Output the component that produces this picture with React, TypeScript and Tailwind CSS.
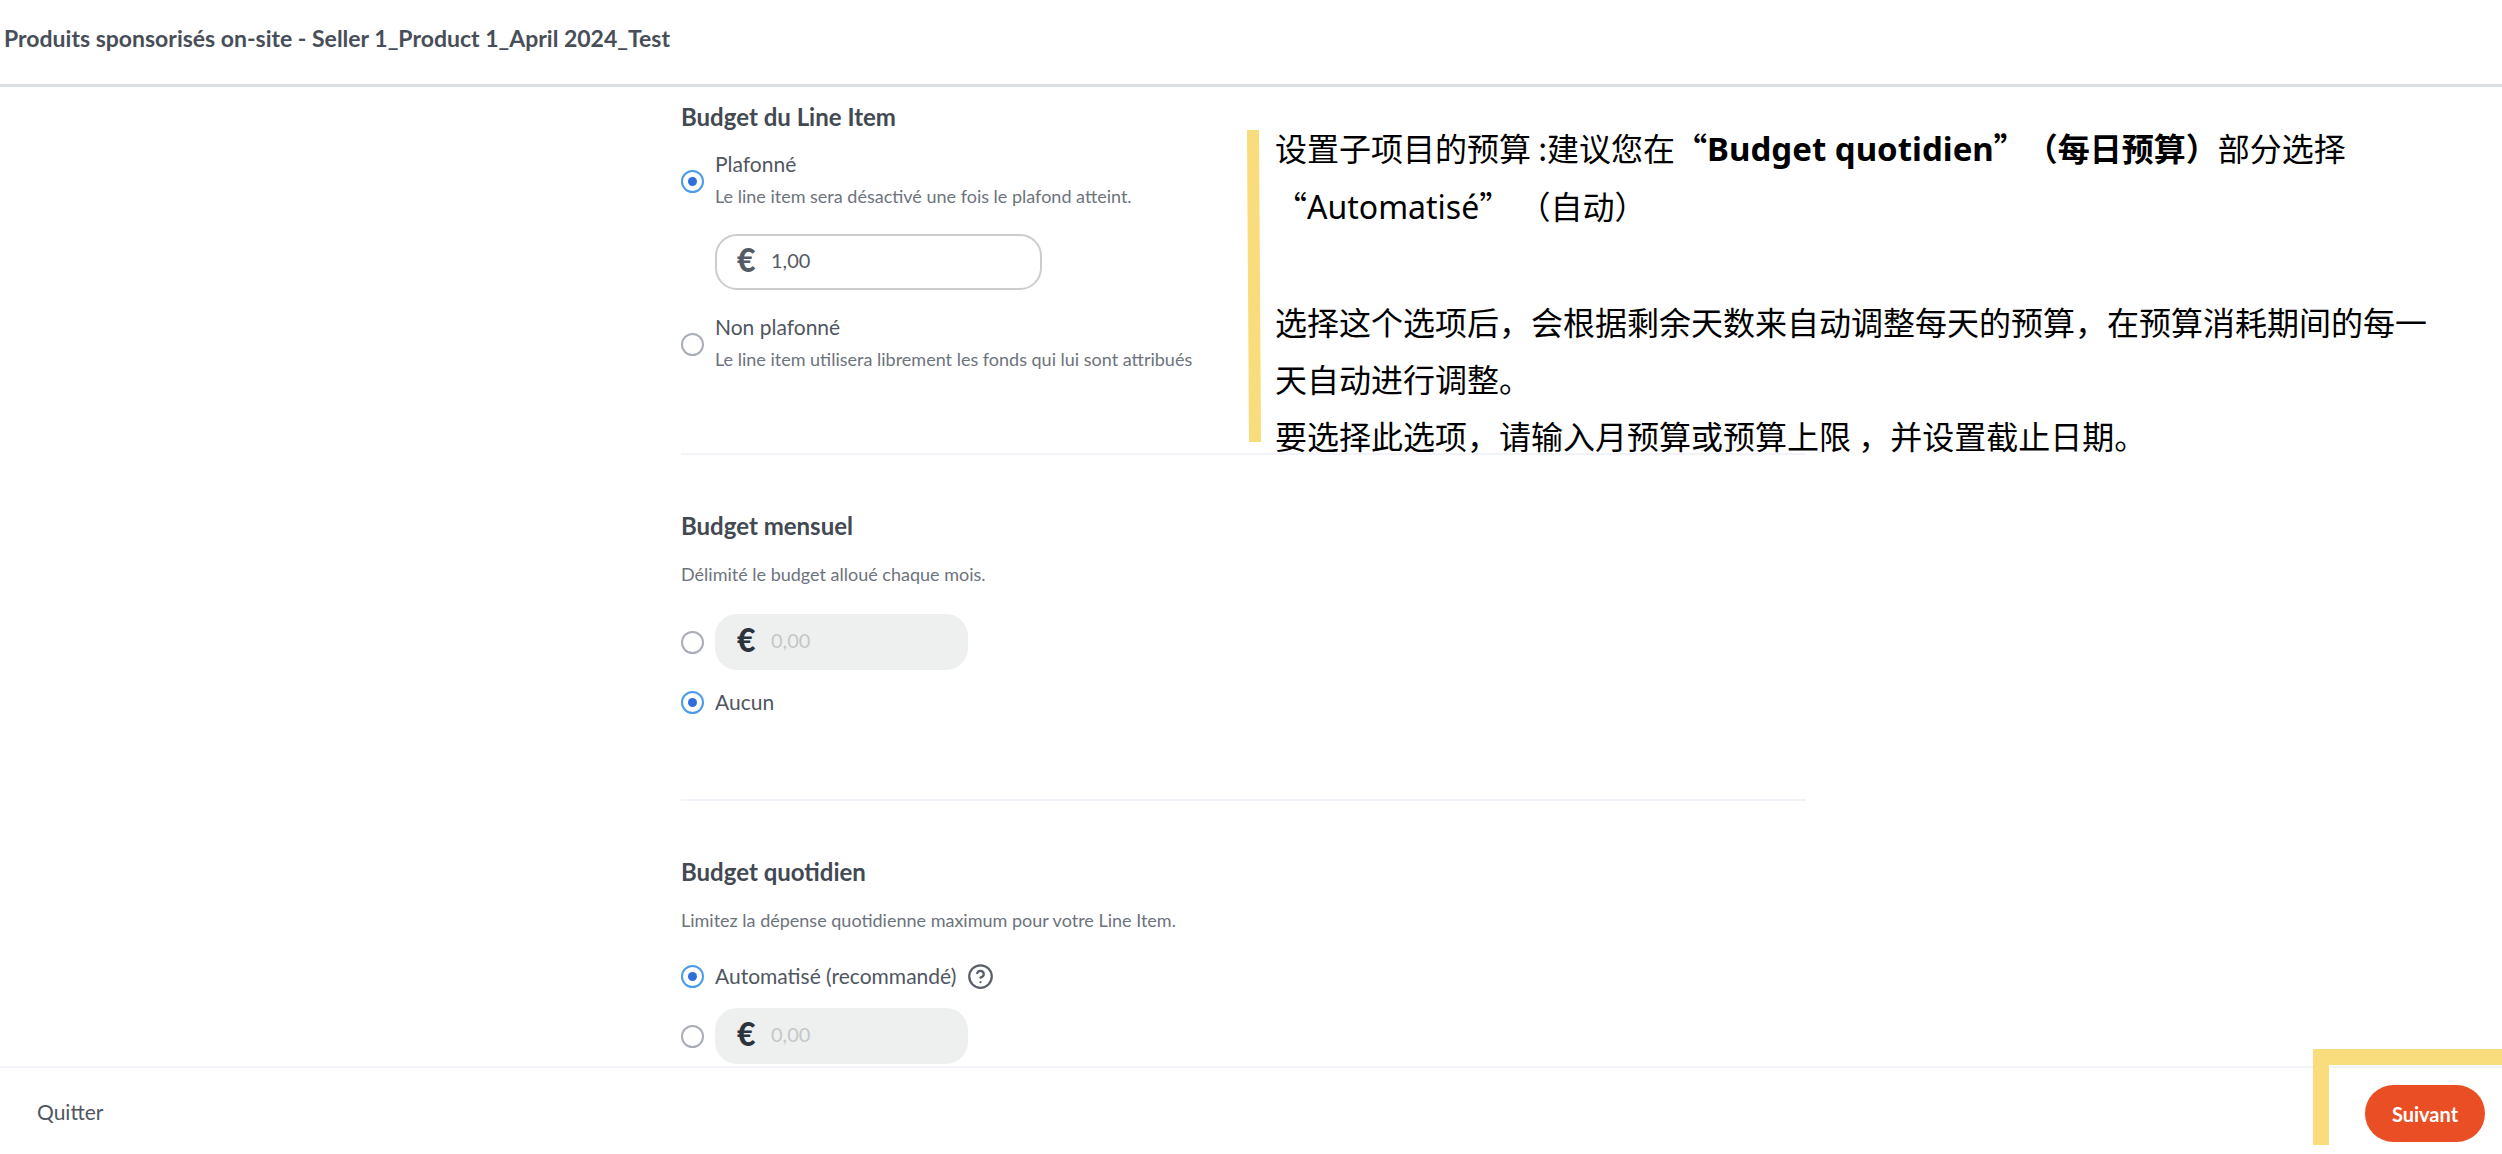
import React, { useState } from 'react';
import { CircleQuestionMark } from 'lucide-react';

interface RadioProps {
  id: string;
  name: string;
  checked: boolean;
  onSelect: () => void;
  label?: string;
}

const Radio: React.FC<RadioProps> = ({ id, name, checked, onSelect, label }) => (
  <input
    type="radio"
    id={id}
    name={name}
    checked={checked}
    onChange={onSelect}
    aria-label={label}
    className="flex size-[23px] shrink-0 appearance-none items-center justify-center rounded-full border-2 border-[#a9adb8] bg-white before:size-[9px] before:rounded-full checked:border-[#4a9be8] checked:before:bg-[#2f6fdc]"
  />
);

interface AmountFieldProps {
  id: string;
  label: string;
  value: string;
  onChange: (value: string) => void;
  disabled?: boolean;
}

const AmountField: React.FC<AmountFieldProps> = ({ id, label, value, onChange, disabled }) => (
  <div
    className={
      disabled
        ? 'flex h-14 w-[253px] items-center rounded-[22px] border-2 border-[#eef0ef] bg-[#eef0ef] pl-5 text-[#2d333d]'
        : 'flex h-14 w-[327px] items-center rounded-[22px] border-2 border-[#cbcdcd] bg-white pl-5 text-[#555b64]'
    }
  >
    <label htmlFor={id} className="w-[34px] shrink-0 pb-1 text-[32px] leading-8 font-black">€</label>
    <input
      id={id}
      type="text"
      inputMode="decimal"
      aria-label={label}
      placeholder="0,00"
      value={value}
      disabled={disabled}
      onChange={(e) => onChange(e.target.value)}
      className="h-8 w-full min-w-0 bg-transparent pb-1 text-[20px] text-[#555b64] placeholder:text-[#c4c7c7] focus:outline-none"
    />
  </div>
);

const App: React.FC = () => {
  const [capType, setCapType] = useState('capped');
  const [capAmount, setCapAmount] = useState('1,00');
  const [monthlyType, setMonthlyType] = useState('none');
  const [monthlyAmount, setMonthlyAmount] = useState('');
  const [dailyType, setDailyType] = useState('auto');
  const [dailyAmount, setDailyAmount] = useState('');

  return (
    <div className="flex min-h-screen flex-col bg-white font-[Lato,sans-serif] text-[21px] text-[#50565f]">
      <header className="flex h-[87px] items-center border-b-3 border-[#dcdfe6] pb-2 pl-1">
        <h1 className="text-[23px] leading-7 font-bold text-[#484e58]">
          Produits sponsorisés on-site - Seller 1_Product 1_April 2024_Test
        </h1>
      </header>

      <main className="flex-1 pr-[15px]">
        <div className="relative mx-auto max-w-[1125px]">
          <section className="border-b-2 border-[#f2f3f8] pt-4 pb-[77px]">
            <h2 className="text-[24px] leading-7 font-bold text-[#434952]">Budget du Line Item</h2>
            <div className="mt-[18px] flex items-center gap-[11px]">
              <Radio id="capped" name="cap" checked={capType === 'capped'} onSelect={() => setCapType('capped')} />
              <label htmlFor="capped">
                <span className="block leading-[30px]">Plafonné</span>
                <span className="block text-[18px] leading-[34px] text-[#6d737c]">
                  Le line item sera désactivé une fois le plafond atteint.
                </span>
              </label>
            </div>
            <div className="mt-[21px] ml-[34px]">
              <AmountField
                id="capAmount"
                label="Budget du Line Item"
                value={capAmount}
                onChange={setCapAmount}
                disabled={capType !== 'capped'}
              />
            </div>
            <div className="mt-[22px] flex items-center gap-[11px]">
              <Radio id="uncapped" name="cap" checked={capType === 'uncapped'} onSelect={() => setCapType('uncapped')} />
              <label htmlFor="uncapped">
                <span className="block leading-[30px]">Non plafonné</span>
                <span className="block text-[18px] leading-[34px] text-[#6d737c]">
                  Le line item utilisera librement les fonds qui lui sont attribués
                </span>
              </label>
            </div>
          </section>

          <section className="border-b-2 border-[#f2f3f8] pt-[57px] pb-[81px]">
            <h2 className="text-[24px] leading-7 font-bold text-[#434952]">Budget mensuel</h2>
            <p className="mt-[22px] text-[18px] leading-6 text-[#6d737c]">Délimité le budget alloué chaque mois.</p>
            <div className="mt-7 flex flex-col gap-4">
              <div className="flex items-center gap-[11px]">
                <Radio
                  id="monthlyCustom"
                  name="monthly"
                  label="Montant mensuel"
                  checked={monthlyType === 'custom'}
                  onSelect={() => setMonthlyType('custom')}
                />
                <AmountField
                  id="monthlyAmount"
                  label="Budget mensuel"
                  value={monthlyAmount}
                  onChange={setMonthlyAmount}
                  disabled={monthlyType !== 'custom'}
                />
              </div>
              <div className="flex items-center gap-[11px]">
                <Radio id="monthlyNone" name="monthly" checked={monthlyType === 'none'} onSelect={() => setMonthlyType('none')} />
                <label htmlFor="monthlyNone" className="leading-8">Aucun</label>
              </div>
            </div>
          </section>

          <section className="pt-[57px]">
            <h2 className="text-[24px] leading-7 font-bold text-[#434952]">Budget quotidien</h2>
            <p className="mt-[22px] text-[18px] leading-6 text-[#6d737c]">
              Limitez la dépense quotidienne maximum pour votre Line Item.
            </p>
            <div className="mt-7 flex flex-col gap-4">
              <div className="flex items-center gap-[11px]">
                <Radio id="dailyAuto" name="daily" checked={dailyType === 'auto'} onSelect={() => setDailyType('auto')} />
                <label htmlFor="dailyAuto" className="leading-8">Automatisé (recommandé)</label>
                <button type="button" aria-label="Aide" className="text-[#5a6069]">
                  <CircleQuestionMark size={27} strokeWidth={2} />
                </button>
              </div>
              <div className="flex items-center gap-[11px]">
                <Radio
                  id="dailyCustom"
                  name="daily"
                  label="Montant quotidien"
                  checked={dailyType === 'custom'}
                  onSelect={() => setDailyType('custom')}
                />
                <AmountField
                  id="dailyAmount"
                  label="Budget quotidien"
                  value={dailyAmount}
                  onChange={setDailyAmount}
                  disabled={dailyType !== 'custom'}
                />
              </div>
            </div>
          </section>

          {/* Note laid over the form */}
          <aside
            lang="zh-CN"
            className="absolute top-8 left-[566px] flex w-[1190px] items-start gap-[14px] font-['Noto_Sans_CJK_SC',sans-serif] text-[32px] leading-[57px] text-black [text-spacing-trim:space-all]"
          >
            <svg width="14" height="312" viewBox="0 0 14 312" className="mt-[11px] shrink-0" aria-hidden="true">
              <polygon points="0,0 12,0 14,312 2,312" fill="#f9dc7c" />
            </svg>
            <div>
              <p>
                设置子项目的预算 :建议您在
                <strong className="font-bold">
                  “<span className="font-['Noto_Sans',sans-serif] text-[33px]">Budget quotidien</span>”（每日预算）
                </strong>
                部分选择
                <br />
                “<span className="font-['Noto_Sans',sans-serif]">Automatisé</span>” （自动）
              </p>
              <p className="mt-[58px]">
                选择这个选项后，会根据剩余天数来自动调整每天的预算，在预算消耗期间的每一天自动进行调整。
              </p>
              <p>要选择此选项，请输入月预算或预算上限 ，并设置截止日期。</p>
            </div>
          </aside>
        </div>
      </main>

      <footer className="relative flex h-[88px] items-start justify-between border-t-2 border-[#f2f3f8] bg-white pt-[17px] pr-[17px] pl-[37px]">
        <button type="button" className="h-[57px] pb-1">Quitter</button>
        <button type="button" className="h-[57px] w-[120px] rounded-full bg-[#ea4e24] text-[20px] font-bold text-white">
          Suivant
        </button>
        <div className="pointer-events-none absolute -top-[19px] right-0 h-24 w-[189px] border-t-16 border-l-16 border-[#f9dc7c]" />
      </footer>
    </div>
  );
};

export default App;
